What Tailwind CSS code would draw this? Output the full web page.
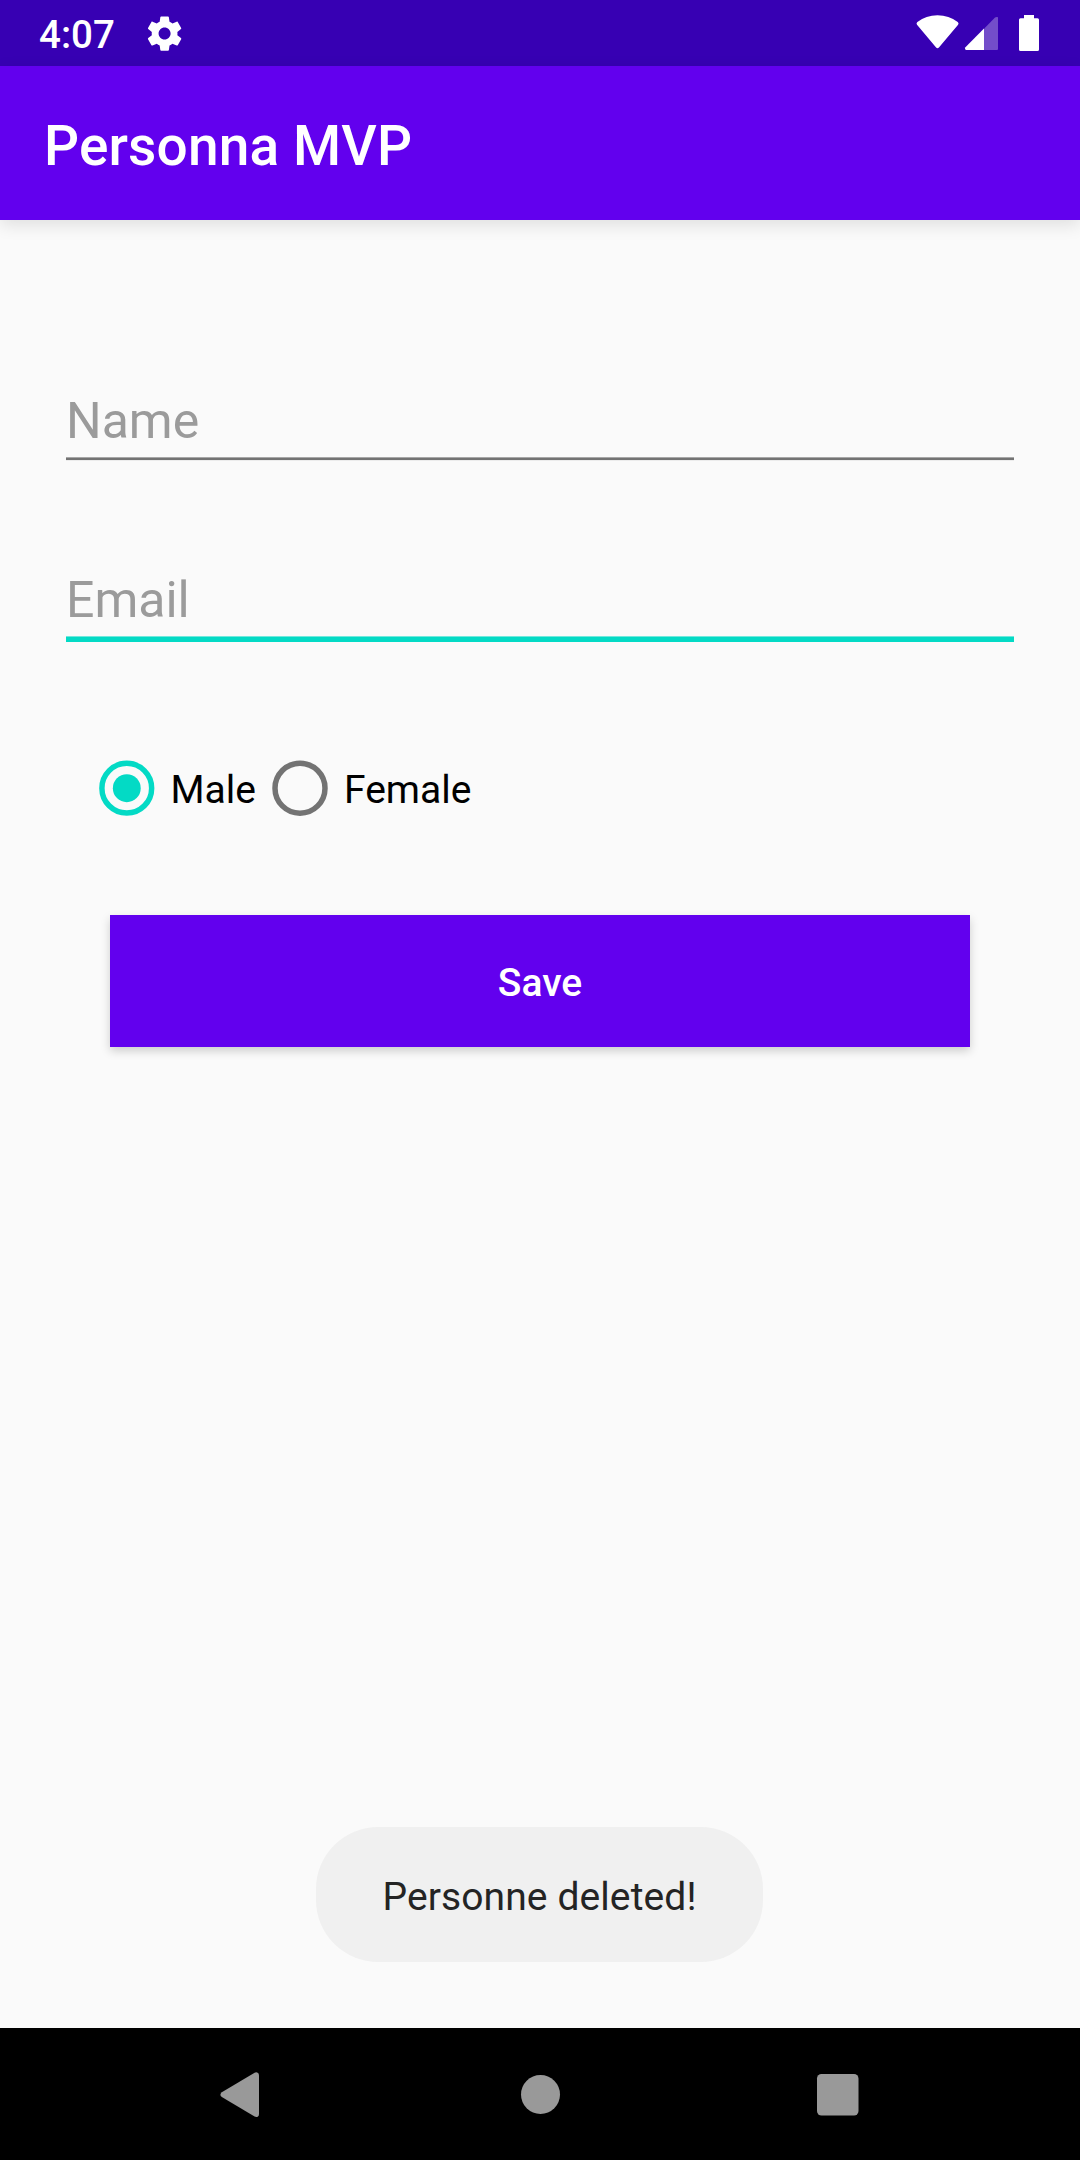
<!DOCTYPE html>
<html lang="en">
<head>
<meta charset="utf-8">
<title>Personna MVP</title>
<script src="https://cdn.jsdelivr.net/npm/@tailwindcss/browser@4"></script>
</head>
<body class="bg-[#fafafa]">
<div class="relative flex h-[2160px] w-[1080px] flex-col overflow-hidden bg-[#fafafa] font-['Roboto',sans-serif]">

  <!-- Status bar -->
  <header class="flex h-[66px] shrink-0 items-start justify-between bg-[#3700b3] pl-[39px] text-white">
    <div class="flex items-start">
      <span class="w-[104.5px] pt-[2px] text-[38.5px] leading-[66px] font-medium">4:07</span>
      <svg class="mt-[12.6px] h-[41.2px] w-[41.2px]" viewBox="0 0 24 24" fill="currentColor"><path d="M19.43 12.98c.04-.32.07-.64.07-.98s-.03-.66-.07-.98l2.11-1.65c.19-.15.24-.42.12-.64l-2-3.46c-.12-.22-.39-.3-.61-.22l-2.49 1c-.52-.4-1.08-.73-1.69-.98l-.38-2.65C14.46 2.18 14.25 2 14 2h-4c-.25 0-.46.18-.49.42l-.38 2.65c-.61.25-1.17.59-1.69.98l-2.49-1c-.23-.09-.49 0-.61.22l-2 3.46c-.13.22-.07.49.12.64l2.11 1.65c-.04.32-.07.65-.07.98s.03.66.07.98l-2.11 1.65c-.19.15-.24.42-.12.64l2 3.46c.12.22.39.3.61.22l2.49-1c.52.4 1.08.73 1.69.98l.38 2.65c.03.24.24.42.49.42h4c.25 0 .46-.18.49-.42l.38-2.65c.61-.25 1.17-.59 1.69-.98l2.49 1c.23.09.49 0 .61-.22l2-3.46c.12-.22.07-.49-.12-.64l-2.11-1.65zM12 15.5c-1.93 0-3.5-1.57-3.5-3.5s1.57-3.5 3.5-3.5 3.5 1.57 3.5 3.5-1.57 3.5-3.5 3.5z"/></svg>
    </div>
    <svg class="h-[66px] w-[180px]" viewBox="900 0 180 66" fill="currentColor">
      <path d="M917 24.700Q915.900 23.200 917.400 22.100Q926 15.300 937.500 15.300T957.700 22.100Q959.200 23.200 958.100 24.700L938.900 47.600Q937.500 49 936.100 47.600Z"/>
      <path fill-opacity=".3" d="M984 28.700L995 17.600Q996.300 16.500 998 17.200V49Q998 50 997 50H984Z"/>
      <path d="M984 28.500V50H966Q964.300 49.600 965.200 47.600Z"/>
      <path d="M1024 15H1034V18.300H1037.500Q1039 18.300 1039 19.800V49.500Q1039 51 1037.500 51H1020.500Q1019 51 1019 49.500V19.800Q1019 18.300 1020.500 18.300H1024Z"/>
    </svg>
  </header>

  <!-- App bar -->
  <div class="relative z-10 flex h-[154px] shrink-0 items-center bg-[#6200ee] pt-[6px] pl-[44px] shadow-[0_5px_16px_rgba(0,0,0,0.11)]">
    <h1 class="text-[55px] leading-[64px] font-medium tracking-[0.15px] text-white">Personna MVP</h1>
  </div>

  <!-- Form -->
  <main class="flex grow flex-col px-[66px] pt-[169px]">
    <div class="flex h-[72px] flex-col">
      <div class="h-[68px] text-[50px] leading-[64px] text-[#9b9b9b]">Name</div>
      <div class="h-px shrink-0 bg-[#a7a7a7]"></div>
      <div class="h-[2px] shrink-0 bg-[#737373]"></div>
      <div class="h-px shrink-0 bg-[#ececec]"></div>
    </div>
    <div class="mt-[107px] flex h-[74px] flex-col">
      <div class="h-[68px] text-[50px] leading-[64px] text-[#9b9b9b]">Email</div>
      <div class="h-px shrink-0 bg-[#71e8dc]"></div>
      <div class="h-[5px] shrink-0 bg-[#03dac5]"></div>
    </div>

    <div class="mt-[102px] ml-[17px] flex h-[88px] items-center text-[39px] text-black">
      <label class="flex w-[173px] items-center">
        <svg class="h-[88px] w-[88px]" viewBox="0 0 88 88"><circle cx="44" cy="44.200" r="25" fill="none" stroke="#03dac5" stroke-width="5.500"/><circle cx="44" cy="44.200" r="14" fill="#03dac5"/></svg>
        <span class="pt-[4px] leading-[46px]">Male</span>
      </label>
      <label class="flex items-center">
        <svg class="h-[88px] w-[88px]" viewBox="0 0 88 88"><circle cx="44" cy="44.200" r="25" fill="none" stroke="#737373" stroke-width="5.500"/></svg>
        <span class="pt-[4px] leading-[46px]">Female</span>
      </label>
    </div>

    <button class="mx-[44px] mt-[83px] h-[132px] bg-[#6200ee] pt-[5px] text-[39px] font-medium text-white shadow-[0_4px_9px_rgba(0,0,0,0.18)]">Save</button>
  </main>

  <!-- Toast -->
  <div class="absolute top-[1827px] left-[316px] flex h-[135px] w-[447px] items-center justify-center rounded-[62px] bg-[#f0f0f0] pt-[5px] text-[39px] tracking-[0.1px] text-[#242424]">Personne deleted!</div>

  <!-- Navigation bar -->
  <nav class="flex h-[132px] shrink-0 items-center bg-black">
    <svg class="h-[132px] w-[1080px]" viewBox="0 0 1080 132" fill="#999">
      <path d="M221.800 64.200L254.600 44.700Q256.200 43.800 257.700 44.700Q259 45.500 259 47.500V86Q259 88 257.700 88.700Q256.200 89.500 254.600 88.600L221.800 69Q219 66.700 221.800 64.200Z"/>
      <circle cx="540.500" cy="66.500" r="19.500"/>
      <rect x="817" y="46" width="41.500" height="41.500" rx="4.500"/>
    </svg>
  </nav>
</div>
</body>
</html>
